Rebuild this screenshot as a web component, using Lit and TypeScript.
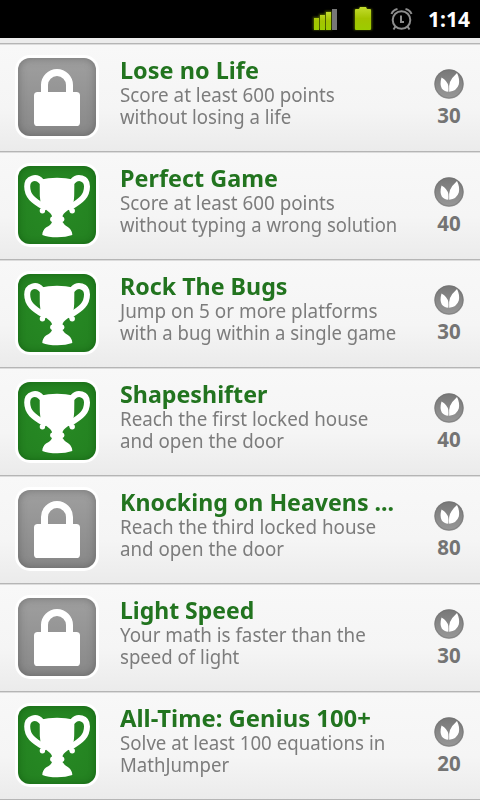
import { LitElement, html, css, svg } from "lit";
import { customElement, property } from "lit/decorators.js";
import { styleMap } from "lit/directives/style-map.js";

interface Fitted {
  text: string;
  /** Horizontal condensing factor of the line. */
  fit: number;
}

interface Achievement {
  title: Fitted;
  lines: Fitted[];
  points: number;
  unlocked: boolean;
}

const t = (text: string, fit: number): Fitted => ({ text, fit });

const ACHIEVEMENTS: Achievement[] = [
  { title: t("Lose no Life", 0.978), lines: [t("Score at least 600 points", 0.94), t("without losing a life", 0.93)], points: 30, unlocked: false },
  { title: t("Perfect Game", 0.974), lines: [t("Score at least 600 points", 0.94), t("without typing a wrong solution", 0.924)], points: 40, unlocked: true },
  { title: t("Rock The Bugs", 0.968), lines: [t("Jump on 5 or more platforms", 0.945), t("with a bug within a single game", 0.926)], points: 30, unlocked: true },
  { title: t("Shapeshifter", 0.968), lines: [t("Reach the first locked house", 0.939), t("and open the door", 0.937)], points: 40, unlocked: true },
  { title: t("Knocking on Heavens ...", 0.965), lines: [t("Reach the third locked house", 0.941), t("and open the door", 0.937)], points: 80, unlocked: false },
  { title: t("Light Speed", 0.957), lines: [t("Your math is faster than the", 0.939), t("speed of light", 0.93)], points: 30, unlocked: false },
  { title: t("All-Time: Genius 100+", 0.993), lines: [t("Solve at least 100 equations in", 0.934), t("MathJumper", 0.93)], points: 20, unlocked: true },
];

const lock = svg`
  <path d="M26.500 38V27a12.500 12.500 0 0 1 25 0V38" fill="none" stroke="#fff" stroke-width="7"/>
  <rect x="16" y="34" width="46" height="34" rx="3.600" fill="#fff"/>`;

const trophy = svg`
  <g fill="none" stroke="#fff" stroke-width="6" stroke-linecap="round">
    <path d="M23 15C18.500 10 9.200 11.500 9.200 20.500C9.200 30 15 34.500 26 41"/>
    <path d="M55 15C59.500 10 69 11.500 69 20.500C69 30 63.500 34.500 52.500 41"/>
  </g>
  <path fill="#fff" d="M21.700 13.700Q39 9.800 56.400 13.700L56.200 30Q56 42 49.500 44.500Q44.500 48 44.500 50.500A2.900 2.900 0 0 1 44.500 56Q46 59 50.500 61.500Q54.300 64.500 54.300 69Q48 71.300 39.300 71.300Q30 71.300 24.300 69Q24.300 64.500 28 61.500Q33 59 34 56A2.900 2.900 0 0 1 34 50.500Q34 48 29 44.500Q22 40 21.800 30Z"/>
  <circle cx="24.400" cy="44.800" r="2.700" fill="#fff"/>
  <circle cx="54.200" cy="44.800" r="2.700" fill="#fff"/>
  <path d="M24.500 43.500L29 39M54 43.500L49.500 39" stroke="#fff" stroke-width="5"/>`;

@customElement("achievement-row")
class AchievementRow extends LitElement {
  @property({ attribute: false }) item!: Achievement;

  static styles = css`
    :host {
      display: flex;
      box-sizing: border-box;
      height: 108px;
      padding: 11px 0 0 15px;
      border-top: 1px solid #b5b5b5;
      background: linear-gradient(#dcdcdc 0 1px, #f8f8f8 1px, #f5f5f5 60%, #ebebeb 100%);
    }
    .badge {
      box-sizing: border-box;
      width: 84px;
      height: 84px;
      border: 3px solid #fff;
      border-radius: 15px;
      background: #fff;
      flex: none;
    }
    .tile {
      display: block;
      width: 78px;
      height: 78px;
      border-radius: 12px;
      background: linear-gradient(#9f9f9f, #888);
      box-shadow: inset 0 0 8px rgba(60, 60, 60, 0.45);
    }
    .tile.unlocked {
      background: radial-gradient(#278a24, #238020);
      box-shadow: inset 0 0 7px rgba(0, 60, 0, 0.4);
    }
    .text {
      width: 300px;
      margin-left: 21px;
      padding-top: 1px;
      white-space: nowrap;
    }
    .title,
    .line {
      width: max-content;
      transform-origin: 0 0;
    }
    .title {
      height: 28px;
      font: 700 24px/28px "Noto Sans", sans-serif;
      color: #22741f;
    }
    .line {
      height: 22px;
      font: 400 20px/22px "Noto Sans", sans-serif;
      color: #7c7c7c;
    }
    .score {
      width: 58px;
      text-align: center;
    }
    .leaf {
      display: block;
      width: 30px;
      height: 30px;
      margin: 14px auto 3px;
    }
    .points {
      font: 700 20.5px/26px "Noto Sans", sans-serif;
      color: #747474;
    }
  `;

  private fitted(part: Fitted, name: string) {
    return html`<div class=${name} style=${styleMap({ transform: `scaleX(${part.fit})` })}>${part.text}</div>`;
  }

  render() {
    const { title, lines, points, unlocked } = this.item;
    return html`
      <div class="badge">
        <svg class="tile ${unlocked ? "unlocked" : ""}" viewBox="0 0 78 78">${unlocked ? trophy : lock}</svg>
      </div>
      <div class="text">
        ${this.fitted(title, "title")} ${lines.map((line) => this.fitted(line, "line"))}
      </div>
      <div class="score">
        <svg class="leaf" viewBox="0 0 30 30">
          <defs>
            <linearGradient id="disc" x1="0" y1="0" x2="0" y2="1">
              <stop offset="0" stop-color="#777" />
              <stop offset="1" stop-color="#989898" />
            </linearGradient>
          </defs>
          <circle cx="15" cy="15" r="14.700" fill="url(#disc)" />
          <circle cx="15" cy="15" r="14" fill="none" stroke="#707070" stroke-opacity=".5" />
          <path fill="#fff" d="M7.500 8.500Q13.500 12 14.300 17Q14.700 20 14.300 22.800Q10 22.500 7.800 19.500Q5.500 15.500 7.500 8.500ZM23 4Q26 10 24.800 15.500Q22.800 22 15.200 22.800Q14.500 17 16 13Q18 8.500 23 4Z" />
        </svg>
        <div class="points">${points}</div>
      </div>
    `;
  }
}

@customElement("app-root")
class AppRoot extends LitElement {
  static styles = css`
    :host {
      display: block;
      width: 480px;
      height: 800px;
      overflow: hidden;
      background: #ececec;
    }
    .status {
      display: flex;
      box-sizing: border-box;
      height: 38px;
      background: #000;
      justify-content: flex-end;
    }
    .icons {
      width: 120px;
      height: 38px;
      flex: none;
    }
    .clock {
      box-sizing: border-box;
      width: 60px;
      padding-right: 10px;
      text-align: right;
      font: 700 21px/38px "Noto Sans", sans-serif;
      color: #fff;
    }
    .list {
      padding-top: 5px;
      border-bottom: 1px solid #b5b5b5;
    }
  `;

  render() {
    return html`
      <div class="status">
        <svg class="icons" viewBox="300 0 120 38">
          <defs>
            <linearGradient id="charge" x1="0" y1="0" x2="0" y2="1">
              <stop offset="0" stop-color="#c3dc2d" />
              <stop offset=".5" stop-color="#a4c400" />
              <stop offset="1" stop-color="#9ccc00" />
            </linearGradient>
            <filter id="glow" x="-30%" y="-30%" width="160%" height="160%">
              <feGaussianBlur stdDeviation="1.300" />
            </filter>
          </defs>
          <g fill="#6d8500" filter="url(#glow)" opacity=".7">
            <path d="M313 17h6v-3h6v-3h7v19h-19z" />
            <path d="M354 9h5v-2h8v2h5v21h-18z" />
          </g>
          <g fill="url(#charge)">
            <path d="M314 18h5v12h-5zM320 15h5v15h-5zM326 12h5v18h-5z" />
            <path d="M360 7h6l1 2h3q1 0 1 1v19q0 1-1 1h-14q-1 0-1-1v-19q0-1 1-1h3z" />
          </g>
          <path fill="#777" d="M332 9h5v21h-5z" />
          <g fill="none" stroke="#8d8d8d" stroke-width="2">
            <circle cx="401.500" cy="20" r="8.800" />
            <path d="M401 15.500v6.500h3M391.500 14q1.500-4 6-5M411.500 14q-1.500-4-6-5M395.500 26.500l-2 3M407.500 26.500l2 3" />
          </g>
        </svg>
        <div class="clock">1:14</div>
      </div>
      <div class="list">
        ${ACHIEVEMENTS.map((item) => html`<achievement-row .item=${item}></achievement-row>`)}
      </div>
    `;
  }
}
